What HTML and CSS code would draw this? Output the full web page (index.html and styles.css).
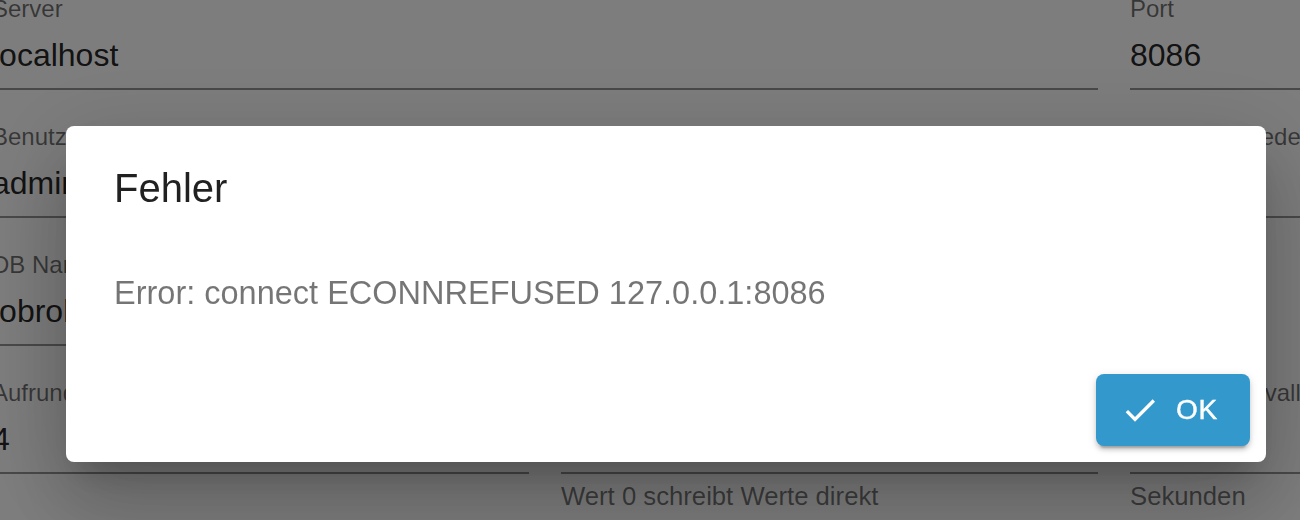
FILE: index.html
```html
<!DOCTYPE html>
<html lang="de">
<head>
<meta charset="utf-8">
<title>Fehler</title>
<link rel="stylesheet" href="styles.css">
</head>
<body>
<div class="form">
  <div class="row">
    <div class="field span2">
      <div class="label">Server</div>
      <div class="value">localhost</div>
    </div>
    <div class="field">
      <div class="label">Port</div>
      <div class="value">8086</div>
    </div>
  </div>
  <div class="row">
    <div class="field">
      <div class="label">Benutzername</div>
      <div class="value">admin</div>
    </div>
    <div class="field">
      <div class="label">Kennwort</div>
      <div class="value"></div>
    </div>
    <div class="field">
      <div class="label">Kennwort wiederholen</div>
      <div class="value"></div>
    </div>
  </div>
  <div class="row">
    <div class="field">
      <div class="label">DB Name</div>
      <div class="value">iobroker</div>
    </div>
    <div class="field">
      <div class="label">Protokoll</div>
      <div class="value">http</div>
    </div>
  </div>
  <div class="row">
    <div class="field">
      <div class="label">Aufrunden auf</div>
      <div class="value">4</div>
    </div>
    <div class="field">
      <div class="label">Speicherpuffer</div>
      <div class="value">0</div>
      <div class="helper">Wert 0 schreibt Werte direkt</div>
    </div>
    <div class="field">
      <div class="label">Sammelintervall</div>
      <div class="value">0</div>
      <div class="helper">Sekunden</div>
    </div>
  </div>
</div>

<div class="overlay">
  <div class="dialog" role="dialog">
    <h2 class="dialog-title">Fehler</h2>
    <div class="dialog-content">
      <p class="dialog-text">Error: connect ECONNREFUSED 127.0.0.1:8086</p>
    </div>
    <div class="dialog-actions">
      <button class="btn-ok" type="button">
        <svg class="btn-icon" viewBox="0 0 24 24" aria-hidden="true"><path d="M9 16.17L4.83 12l-1.42 1.41L9 19 21 7l-1.41-1.41z"/></svg>
        <span>OK</span>
      </button>
    </div>
  </div>
</div>
</body>
</html>
```
FILE: styles.css
```css
html, body {
  margin: 0;
  padding: 0;
  height: 100%;
  overflow: hidden;
  background: #ffffff;
  font-family: "Liberation Sans", Arial, Helvetica, sans-serif;
}

.form {
  display: flex;
  flex-direction: column;
  gap: 31px;
  margin: -7px 0 0 -8px;
}

.row {
  display: grid;
  grid-template-columns: 537px 537px 537px;
  column-gap: 32px;
}

.span2 {
  grid-column: span 2;
}

.field {
  display: flex;
  flex-direction: column;
  min-width: 0;
}

.label {
  font-size: 24px;
  line-height: 32px;
  height: 32px;
  margin-bottom: 10px;
  color: rgba(0, 0, 0, 0.56);
  white-space: nowrap;
}

.value {
  font-size: 32px;
  line-height: 40px;
  height: 40px;
  padding-bottom: 13px;
  border-bottom: 2px solid rgba(0, 0, 0, 0.42);
  color: rgba(0, 0, 0, 0.87);
  white-space: nowrap;
}

.helper {
  margin-top: 4px;
  font-size: 25.7px;
  line-height: 36px;
  color: rgba(0, 0, 0, 0.54);
  white-space: nowrap;
}

.overlay {
  position: fixed;
  inset: 0;
  background: rgba(0, 0, 0, 0.51);
  display: flex;
  align-items: flex-start;
  padding: 126px 0 0 66px;
}

.dialog {
  width: 1200px;
  background: #ffffff;
  border-radius: 8px;
  box-shadow: 0 22px 30px -14px rgba(0, 0, 0, 0.2),
              0 48px 76px 6px rgba(0, 0, 0, 0.14),
              0 18px 92px 16px rgba(0, 0, 0, 0.12);
  display: flex;
  flex-direction: column;
}

.dialog-title {
  margin: 0;
  padding: 32px 48px;
  font-size: 40px;
  line-height: 60px;
  font-weight: 400;
  color: rgba(0, 0, 0, 0.87);
}

.dialog-content {
  padding: 19px 48px 17px;
}

.dialog-text {
  margin: 0 0 24px;
  font-size: 32.5px;
  line-height: 48px;
  color: rgba(0, 0, 0, 0.54);
}

.dialog-actions {
  display: flex;
  justify-content: flex-end;
  padding: 16px;
}

.btn-ok {
  display: inline-flex;
  align-items: center;
  height: 72px;
  padding: 0 32px;
  border: 0;
  border-radius: 8px;
  background: #3399cc;
  color: #ffffff;
  font-family: "Liberation Sans", Arial, Helvetica, sans-serif;
  font-size: 28px;
  letter-spacing: 0.8px;
  text-transform: uppercase;
  -webkit-text-stroke: 0.4px #ffffff;
  box-shadow: 0 6px 2px -4px rgba(0, 0, 0, 0.2),
              0 4px 4px 0 rgba(0, 0, 0, 0.14),
              0 2px 10px 0 rgba(0, 0, 0, 0.12);
}

.btn-icon {
  width: 40px;
  height: 40px;
  margin: 0 16px 0 -8px;
  fill: currentColor;
}
```
